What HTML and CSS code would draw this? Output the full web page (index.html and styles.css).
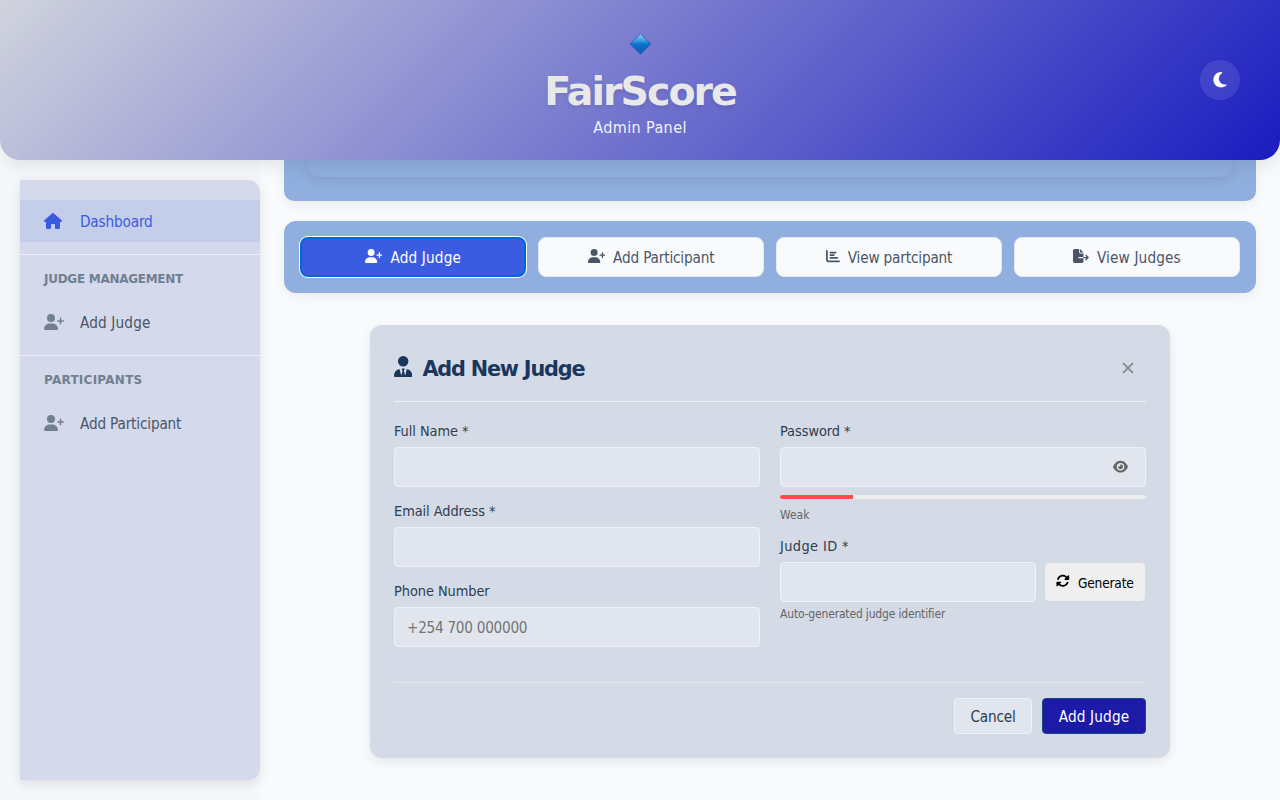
FILE: index.html
```html
<!DOCTYPE html>
<html lang="en">
<head>
<meta charset="utf-8">
<title>FairScore Admin Panel</title>
<link rel="stylesheet" href="styles.css">
</head>
<body>
<svg class="sprite" aria-hidden="true">
  <symbol id="user-plus" viewBox="0 0 640 512"><path d="M96 128a128 128 0 1 1 256 0A128 128 0 1 1 96 128zM0 482.3C0 383.8 79.8 304 178.3 304l91.4 0C368.2 304 448 383.8 448 482.3c0 16.4-13.3 29.7-29.7 29.7L29.7 512C13.3 512 0 498.7 0 482.3zM504 312l0-64-64 0c-13.3 0-24-10.7-24-24s10.7-24 24-24l64 0 0-64c0-13.3 10.7-24 24-24s24 10.7 24 24l0 64 64 0c13.3 0 24 10.7 24 24s-10.7 24-24 24l-64 0 0 64c0 13.3-10.7 24-24 24s-24-10.7-24-24z"/></symbol>
</svg>

<header class="header">
  <svg class="header-gem" viewBox="0 0 22 22"><defs><linearGradient id="gem" x1="0" y1="0" x2="0" y2="1"><stop offset="0" stop-color="#8fd0fa"/><stop offset=".38" stop-color="#2f93e0"/><stop offset=".5" stop-color="#0a74cf"/><stop offset="1" stop-color="#1159ad"/></linearGradient></defs><path d="M11 .7 21.3 11 11 21.3.7 11z" fill="url(#gem)" stroke="#235aa5" stroke-width=".8"/></svg>
  <h1 class="header-title">FairScore</h1>
  <p class="header-subtitle">Admin Panel</p>
  <button class="theme-toggle" aria-label="Toggle theme"><svg class="icon-moon" viewBox="0 0 384 512"><path d="M223.5 32C100 32 0 132.3 0 256S100 480 223.5 480c60.6 0 115.5-24.2 155.8-63.4c5-4.9 6.3-12.5 3.1-18.7s-10.1-9.7-17-8.5c-9.8 1.7-19.8 2.6-30.1 2.6c-96.9 0-175.5-78.8-175.5-176c0-65.8 36-123.1 89.3-153.3c6.1-3.5 9.2-10.5 7.7-17.3s-7.3-11.9-14.3-12.5c-6.3-.5-12.6-.8-19-.8z"/></svg></button>
</header>

<div class="layout">
  <aside class="sidebar-area">
    <nav class="sidebar">
      <div class="nav-group">
        <a class="nav-item nav-item-active"><span class="nav-icon"><svg class="icon-house" viewBox="0 0 576 512"><path d="M575.8 255.5c0 18-15 32.1-32 32.1l-32 0 .7 160.2c0 2.7-.2 5.4-.5 8.1l0 16.2c0 22.1-17.9 40-40 40l-16 0c-1.1 0-2.2 0-3.3-.1c-1.4 .1-2.8 .1-4.2 .1L416 512l-24 0c-22.1 0-40-17.9-40-40l0-24 0-64c0-17.7-14.3-32-32-32l-64 0c-17.7 0-32 14.3-32 32l0 64 0 24c0 22.1-17.9 40-40 40l-24 0-31.9 0c-1.5 0-3-.1-4.5-.2c-1.2 .1-2.4 .2-3.6 .2l-16 0c-22.1 0-40-17.9-40-40l0-112c0-.9 0-1.9 .1-2.8l0-69.6-32 0c-18 0-32-14-32-32.1c0-9 3-17 10-24L266.4 8c7-7 15-8 22-8s15 2 21 7L564.8 231.5c8 7 12 15 11 24z"/></svg></span><span class="text">Dashboard</span></a>
      </div>
      <div class="nav-group">
        <h3 class="nav-title">JUDGE MANAGEMENT</h3>
        <a class="nav-item"><span class="nav-icon"><svg class="icon-plus"><use href="#user-plus"/></svg></span><span class="text text-wide">Add Judge</span></a>
      </div>
      <div class="nav-group">
        <h3 class="nav-title nav-title-wide">PARTICIPANTS</h3>
        <a class="nav-item"><span class="nav-icon"><svg class="icon-plus"><use href="#user-plus"/></svg></span><span class="text">Add Participant</span></a>
      </div>
    </nav>
  </aside>

  <main class="main">
    <section class="summary"><div class="summary-panel"></div></section>

    <section class="actions">
      <button class="action action-focus"><svg class="action-plus"><use href="#user-plus"/></svg><span class="text text-wide">Add Judge</span></button>
      <button class="action"><svg class="action-plus"><use href="#user-plus"/></svg><span class="text">Add Participant</span></button>
      <button class="action"><svg class="action-chart" viewBox="0 0 512 512"><path d="M32 32c17.7 0 32 14.3 32 32l0 336c0 8.8 7.2 16 16 16l400 0c17.7 0 32 14.3 32 32s-14.3 32-32 32L80 480c-44.2 0-80-35.8-80-80L0 64C0 46.3 14.3 32 32 32zm96 96c0-17.7 14.3-32 32-32l192 0c17.7 0 32 14.3 32 32s-14.3 32-32 32l-192 0c-17.7 0-32-14.3-32-32zm32 64l128 0c17.7 0 32 14.3 32 32s-14.3 32-32 32l-128 0c-17.7 0-32-14.3-32-32s14.3-32 32-32zm0 96l256 0c17.7 0 32 14.3 32 32s-14.3 32-32 32l-256 0c-17.7 0-32-14.3-32-32s14.3-32 32-32z"/></svg><span class="text">View partcipant</span></button>
      <button class="action"><svg class="action-file" viewBox="0 0 576 512"><path d="M0 64C0 28.7 28.7 0 64 0L224 0l0 128c0 17.7 14.3 32 32 32l128 0 0 128-168 0c-13.3 0-24 10.7-24 24s10.7 24 24 24l168 0 0 112c0 35.3-28.7 64-64 64L64 512c-35.3 0-64-28.7-64-64L0 64zM384 336l0-48 110.1 0-39-39c-9.4-9.4-9.4-24.6 0-33.9s24.6-9.4 33.9 0l80 80c9.4 9.4 9.4 24.6 0 33.9l-80 80c-9.4 9.4-24.6 9.4-33.9 0s-9.4-24.6 0-33.9l39-39L384 336zm0-208l-128 0L256 0 384 128z"/></svg><span class="text text-wide">View Judges</span></button>
    </section>

    <section class="card">
      <div class="card-header">
        <svg class="icon-tie" viewBox="0 0 448 512"><path d="M96 128a128 128 0 1 0 256 0A128 128 0 1 0 96 128zm94.5 200.2l18.6 31L175.8 483.1l-36-146.9c-2-8.1-9.8-13.4-17.9-11.3C51.9 342.4 0 405.8 0 481.3c0 17 13.8 30.7 30.7 30.7l131.7 0c0 0 0 0 .1 0l5.5 0 112 0 5.5 0c0 0 0 0 .1 0l131.7 0c17 0 30.7-13.8 30.7-30.7c0-75.5-51.9-138.9-121.9-156.4c-8.1-2-15.9 3.3-17.9 11.3l-36 146.9L238.9 359.2l18.6-31c6.4-10.7-1.3-24.2-13.7-24.2L224 304l-19.7 0c-12.4 0-20.1 13.6-13.7 24.2z"/></svg>
        <h2 class="card-title">Add New Judge</h2>
        <button class="close" aria-label="Close"><svg class="icon-close" viewBox="0 0 12 12"><path d="M1.3 1.3 10.7 10.7M10.7 1.3 1.3 10.7"/></svg></button>
      </div>
      <form class="form">
        <div class="form-columns">
          <div class="form-column">
            <div class="field"><label class="label">Full Name *</label><input class="input" type="text"></div>
            <div class="field"><label class="label">Email Address *</label><input class="input" type="email"></div>
            <div class="field"><label class="label">Phone Number</label><input class="input" type="tel" placeholder="+254 700 000000"></div>
          </div>
          <div class="form-column">
            <div class="field-password">
              <label class="label">Password *</label>
              <div class="input password-box"><svg class="icon-eye" viewBox="0 0 576 512"><path d="M288 32c-80.8 0-145.5 36.8-192.6 80.6C48.6 156 17.3 208 2.5 243.7c-3.3 7.9-3.3 16.7 0 24.6C17.3 304 48.6 356 95.4 399.4C142.5 443.2 207.2 480 288 480s145.5-36.8 192.6-80.6c46.8-43.5 78.1-95.4 93-131.1c3.3-7.9 3.3-16.7 0-24.6c-14.9-35.7-46.2-87.7-93-131.1C433.5 68.8 368.8 32 288 32zM144 256a144 144 0 1 1 288 0 144 144 0 1 1 -288 0zm144-64c0 35.3-28.7 64-64 64c-7.1 0-13.9-1.2-20.3-3.3c-5.5-1.8-11.9 1.6-11.7 7.4c.3 6.9 1.3 13.8 3.2 20.7c13.7 51.2 66.4 81.6 117.6 67.9s81.6-66.4 67.9-117.6c-11.1-41.5-47.8-69.4-88.6-71.1c-5.8-.2-9.2 6.1-7.4 11.7c2.1 6.4 3.3 13.2 3.3 20.3z"/></svg></div>
              <div class="strength"><div class="strength-fill"></div></div>
              <p class="hint hint-strength">Weak</p>
            </div>
            <label class="label label-id">Judge ID *</label>
            <div class="id-row"><input class="input" type="text"><button type="button" class="generate"><svg class="icon-rotate" viewBox="0 0 512 512"><path d="M142.9 142.9c-17.5 17.5-30.1 38-37.8 59.8c-5.9 16.7-24.2 25.4-40.8 19.5s-25.4-24.2-19.5-40.8C55.6 150.7 73.2 122 97.6 97.6c87.2-87.2 228.3-87.5 315.8-1L455 55c6.9-6.9 17.2-8.9 26.2-5.2s14.8 12.5 14.8 22.2l0 128c0 13.3-10.7 24-24 24l-8.4 0L344 224c-9.7 0-18.5-5.8-22.2-14.8s-1.7-19.3 5.2-26.2l41.1-41.1c-62.6-61.5-163.1-61.2-225.3 1zM16 312c0-13.3 10.7-24 24-24l7.6 0 .7 0L168 288c9.7 0 18.5 5.8 22.2 14.8s1.7 19.3-5.2 26.2l-41.1 41.1c62.6 61.5 163.1 61.2 225.3-1c17.5-17.5 30.1-38 37.8-59.8c5.9-16.7 24.2-25.4 40.8-19.5s25.4 24.2 19.5 40.8c-10.8 30.6-28.4 59.3-52.9 83.8c-87.2 87.2-228.3 87.5-315.8 1L57 457c-6.9 6.9-17.2 8.9-26.2 5.2S16 449.7 16 440l0-119.6 0-.7 0-7.6z"/></svg><span class="text">Generate</span></button></div>
            <p class="hint">Auto-generated judge identifier</p>
          </div>
        </div>
        <div class="form-footer">
          <button type="button" class="button button-cancel">Cancel</button>
          <button type="button" class="button button-primary">Add Judge</button>
        </div>
      </form>
    </section>
  </main>
</div>
</body>
</html>
```
FILE: styles.css
```css
* { box-sizing: border-box; margin: 0; padding: 0; }
body, button, input {
  font-family: "DejaVu Sans Condensed", "DejaVu Sans", Verdana, sans-serif;
  font-stretch: condensed;
}
body {
  height: 800px;
  overflow: hidden;
  background: #f9fafc;
  color: #2c3e50;
  font-size: 15.2px;
}
svg { display: block; flex: none; fill: currentColor; }
.sprite { display: none; }
.text { padding-top: 2px; letter-spacing: -.17px; }
.text-wide { letter-spacing: .15px; }

.header {
  position: relative;
  z-index: 5;
  height: 160px;
  padding-top: 33px;
  display: flex;
  flex-direction: column;
  align-items: center;
  border-radius: 0 0 20px 20px;
  background: linear-gradient(135deg, #d0d3dd 0%, #1a1cc0 100%);
  box-shadow: 0 4px 20px rgba(0, 0, 0, .1);
}
.header-gem { width: 23px; height: 22px; }
.header-title {
  margin-top: 12px;
  line-height: 48px;
  font-family: "DejaVu Sans", Verdana, sans-serif;
  font-weight: 700;
  font-stretch: normal;
  font-size: 39.5px;
  letter-spacing: -2px;
  color: #e8e8e8;
  text-shadow: 0 2px 4px rgba(0, 0, 0, .1);
}
.header-subtitle { line-height: 26px; font-size: 16px; letter-spacing: .4px; color: #f1f1fb; }
.theme-toggle {
  position: absolute;
  top: 60px;
  right: 40px;
  width: 40px;
  height: 40px;
  display: grid;
  place-items: center;
  border: 0;
  border-radius: 50%;
  background: rgba(255, 255, 255, .1);
  color: #fff;
}
.icon-moon { width: 14px; height: 17.6px; }

.layout { display: grid; grid-template-columns: 260px 1fr; height: 640px; }
.sidebar-area { padding: 20px 0 20px 20px; background: #f5f7fb; }
.sidebar {
  height: 600px;
  padding-top: 20px;
  border-radius: 0 12px 12px 0;
  background: #d4d9eb;
  box-shadow: 0 4px 12px rgba(0, 0, 0, .1);
}
.nav-group { padding-bottom: 12px; }
.nav-group + .nav-group { border-top: 1px solid #eef0f6; }
.nav-title {
  height: 46px;
  padding-left: 24px;
  line-height: 48px;
  font-family: "DejaVu Sans", Verdana, sans-serif;
  font-stretch: normal;
  font-size: 12px;
  letter-spacing: -.28px;
  color: #708090;
}
.nav-title-wide { letter-spacing: .25px; }
.nav-item { display: flex; align-items: center; height: 42px; padding-left: 24px; color: #4a5568; }
.nav-item-active { background: #c4cdea; color: #3b5bdf; }
.nav-icon { width: 36px; color: #708090; }
.nav-item-active .nav-icon { color: #3b5bdf; }
.icon-house { width: 18px; height: 16px; }
.icon-plus { width: 20px; height: 16px; }

.main { padding: 0 24px; }
.summary { height: 41px; padding: 0 24px; border-radius: 0 0 10px 10px; background: #90afde; box-shadow: 0 4px 12px rgba(0, 0, 0, .06); }
.summary-panel { height: 17px; border-radius: 0 0 12px 12px; background: #90afde; box-shadow: 0 4px 12px rgba(0, 0, 0, .08); }
.actions {
  display: grid;
  grid-template-columns: repeat(4, 1fr);
  gap: 12px;
  margin-top: 20px;
  padding: 16px;
  border-radius: 12px;
  background: #90afde;
  box-shadow: 0 4px 12px rgba(0, 0, 0, .06);
}
.action {
  display: flex;
  align-items: center;
  justify-content: center;
  gap: 8px;
  height: 40px;
  border: 1px solid #e2e8f0;
  border-radius: 8px;
  background: #f9fafc;
  color: #4a5568;
  font-size: 15.2px;
}
.action svg { margin-top: -3px; }
.action-focus { border: 2px solid #0067d6; background: #3b5ce1; color: #fff; box-shadow: 0 0 0 1px #fff; }
.action-plus { width: 17.5px; height: 14px; }
.action-chart { width: 14px; height: 14px; }
.action-file { width: 15.8px; height: 14px; }

.card {
  width: 800px;
  margin: 32px auto 0;
  padding: 24px;
  border-radius: 12px;
  background: #d4dae6;
  box-shadow: 0 4px 12px rgba(0, 0, 0, .08);
}
.card-header { display: flex; align-items: center; height: 53px; padding-bottom: 14px; border-bottom: 1px solid #edf0f4; color: #1a365d; }
.icon-tie { width: 18.4px; height: 21px; margin-top: -4px; }
.card-title {
  margin-left: 10px;
  padding-top: 2px;
  font-family: "DejaVu Sans", Verdana, sans-serif;
  font-stretch: normal;
  font-size: 20.8px;
  letter-spacing: -1.2px;
}
.close { margin-left: auto; padding: 12px; border: 0; background: none; color: #7f8c8d; }
.icon-close { width: 12px; height: 12px; padding: .4px; fill: none; stroke: currentColor; stroke-width: 2; stroke-linecap: round; }
.form { padding-top: 19px; }
.form-columns { display: grid; grid-template-columns: 1fr 1fr; gap: 20px; }
.form-column { min-width: 0; }
.field + .field { margin-top: 14px; }
.label { display: block; height: 20px; margin-bottom: 6px; line-height: 20px; font-size: 14.4px; letter-spacing: -.05px; }
.label-id { letter-spacing: .4px; }
.input {
  display: block;
  width: 100%;
  height: 40px;
  padding: 2px 12px 0;
  border: 1px solid #eff1f6;
  border-radius: 4px;
  background: #e1e5ee;
  color: #2c3e50;
  font-size: 15.2px;
  letter-spacing: -.28px;
}
.input::placeholder { color: #757575; opacity: 1; }
.password-box { display: flex; align-items: center; justify-content: flex-end; padding: 0 17px 0 12px; color: #666; }
.icon-eye { width: 15px; height: 13.4px; }
.strength { height: 4px; margin-top: 8px; overflow: hidden; border-radius: 2px; background: #eee; }
.strength-fill { width: 20%; height: 4px; background: #ff4d4f; }
.hint { line-height: 20px; margin-top: 2px; font-size: 12px; letter-spacing: -.17px; color: #666; }
.hint-strength { margin: 6px 0 11px; letter-spacing: 0; }
.id-row { display: grid; grid-template-columns: 256px 102px; gap: 8px; align-items: center; }
.generate {
  display: flex;
  align-items: center;
  justify-content: center;
  gap: 8px;
  height: 40px;
  border: 1px solid #d7dae2;
  border-radius: 5px;
  background: #efefef;
  color: #000;
  font-size: 13.6px;
}
.icon-rotate { width: 13.6px; height: 13.6px; margin-top: -3px; }
.form-footer { display: flex; justify-content: flex-end; gap: 10px; margin-top: 35px; padding-top: 15px; border-top: 1px solid #e2e6ee; }
.button { height: 36px; padding-top: 2px; border-radius: 4px; font-size: 15.2px; }
.button-cancel { width: 78px; border: 1px solid #eff1f6; background: #e1e5ee; color: #2c3e50; letter-spacing: -.2px; }
.button-primary { width: 104px; border: 1px solid #1a4a7a; background: #1b1ba8; color: #fff; letter-spacing: .15px; }
```
